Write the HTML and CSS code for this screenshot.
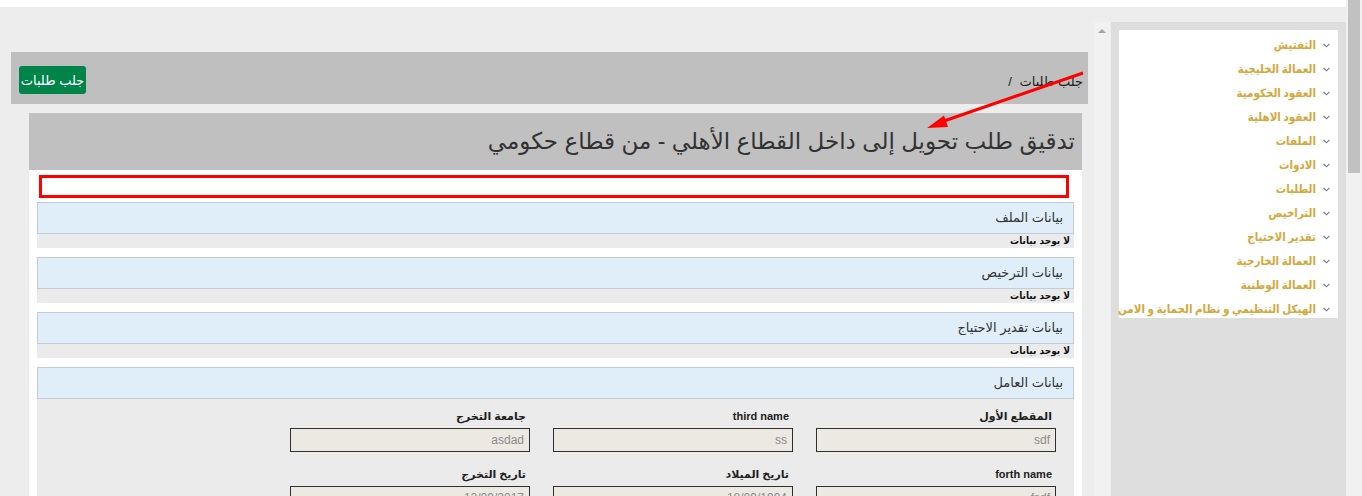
FILE: index.html
```html
<!DOCTYPE html>
<html lang="ar">

<head>
  <meta charset="UTF-8">
  <meta name="viewport" content="width=device-width, initial-scale=1.0">
  <title>تدقيق طلب تحويل</title>
  <link rel="stylesheet" href="styles.css">
</head>

<body>
  <div class="page">
    <div class="viewport">
      <div class="topbar"></div>
      <div class="layout">
        <div class="content">
          <div class="toolbar">
            <div class="breadcrumb">جلب طلبات <span class="sep">/</span></div>
            <button class="fetch-button">جلب طلبات</button>
          </div>

          <div class="request">
            <div class="request-title">تدقيق طلب تحويل إلى داخل القطاع الأهلي - من قطاع حكومي</div>
            <div class="request-body">
              <div class="annotation-box"></div>

              <div class="section-head">بيانات الملف</div>
              <div class="section-empty">لا يوجد بيانات</div>

              <div class="section-head">بيانات الترخيص</div>
              <div class="section-empty">لا يوجد بيانات</div>

              <div class="section-head">بيانات تقدير الاحتياج</div>
              <div class="section-empty">لا يوجد بيانات</div>

              <div class="section-head">بيانات العامل</div>
              <div class="worker-form">
                <div class="field">
                  <label>المقطع الأول</label>
                  <div class="value">sdf</div>
                </div>
                <div class="field">
                  <label>third name</label>
                  <div class="value">ss</div>
                </div>
                <div class="field">
                  <label>جامعة التخرج</label>
                  <div class="value">asdad</div>
                </div>
                <div class="field">
                  <label>forth name</label>
                  <div class="value">fsdf</div>
                </div>
                <div class="field">
                  <label>تاريخ الميلاد</label>
                  <div class="value">18/09/1994</div>
                </div>
                <div class="field">
                  <label>تاريخ التخرج</label>
                  <div class="value">12/09/2017</div>
                </div>
              </div>
            </div>
          </div>
        </div>

        <div class="inner-scroll">
          <div class="scroll-up"></div>
        </div>

        <div class="sidebar">
          <ul class="menu">
            <li><svg class="chev" viewBox="0 0 7 5"><polyline points="0.6,0.8 3.5,3.8 6.4,0.8" /></svg><span>التفتيش</span></li>
            <li><svg class="chev" viewBox="0 0 7 5"><polyline points="0.6,0.8 3.5,3.8 6.4,0.8" /></svg><span>العمالة الخليجية</span></li>
            <li><svg class="chev" viewBox="0 0 7 5"><polyline points="0.6,0.8 3.5,3.8 6.4,0.8" /></svg><span>العقود الحكومية</span></li>
            <li><svg class="chev" viewBox="0 0 7 5"><polyline points="0.6,0.8 3.5,3.8 6.4,0.8" /></svg><span>العقود الاهلية</span></li>
            <li><svg class="chev" viewBox="0 0 7 5"><polyline points="0.6,0.8 3.5,3.8 6.4,0.8" /></svg><span>الملفات</span></li>
            <li><svg class="chev" viewBox="0 0 7 5"><polyline points="0.6,0.8 3.5,3.8 6.4,0.8" /></svg><span>الادوات</span></li>
            <li><svg class="chev" viewBox="0 0 7 5"><polyline points="0.6,0.8 3.5,3.8 6.4,0.8" /></svg><span>الطلبات</span></li>
            <li><svg class="chev" viewBox="0 0 7 5"><polyline points="0.6,0.8 3.5,3.8 6.4,0.8" /></svg><span>التراخيص</span></li>
            <li><svg class="chev" viewBox="0 0 7 5"><polyline points="0.6,0.8 3.5,3.8 6.4,0.8" /></svg><span>تقدير الاحتياج</span></li>
            <li><svg class="chev" viewBox="0 0 7 5"><polyline points="0.6,0.8 3.5,3.8 6.4,0.8" /></svg><span>العمالة الخارجية</span></li>
            <li><svg class="chev" viewBox="0 0 7 5"><polyline points="0.6,0.8 3.5,3.8 6.4,0.8" /></svg><span>العمالة الوطنية</span></li>
            <li><svg class="chev" viewBox="0 0 7 5"><polyline points="0.6,0.8 3.5,3.8 6.4,0.8" /></svg><span>الهيكل التنظيمي و نظام الحماية و الامن</span></li>
          </ul>
        </div>
      </div>
    </div>

    <div class="page-scroll">
      <div class="page-thumb"></div>
    </div>
  </div>

  <svg class="arrow-note" viewBox="0 0 1362 496" xmlns="http://www.w3.org/2000/svg">
    <line x1="1083" y1="73" x2="944" y2="121" />
    <polygon points="927,128 944,115.6 948,127" />
  </svg>
</body>

</html>
```

FILE: styles.css
```css
html,
body {
  margin: 0;
  height: 100%;
  overflow: hidden;
}

body {
  font-family: "Liberation Sans", "DejaVu Sans", sans-serif;
  background-color: #ededed;
  color: #333;
}

.page {
  display: flex;
  height: 100%;
}

.viewport {
  flex: 1;
  display: flex;
  flex-direction: column;
  min-width: 0;
}

.topbar {
  height: 7px;
  background: #fff;
  flex-shrink: 0;
}

.layout {
  flex: 1;
  display: flex;
  padding-top: 15px;
  min-height: 0;
}

/* main column */

.content {
  width: 1094px;
  flex-shrink: 0;
  box-sizing: border-box;
  padding: 30px 6px 0 11px;
}

.toolbar {
  direction: rtl;
  display: flex;
  justify-content: space-between;
  align-items: center;
  height: 52px;
  background: #bfbfbf;
  padding: 0 5px 0 8px;
}

.breadcrumb {
  font-size: 13px;
  color: #222;
  padding-top: 6px;
}

.breadcrumb .sep {
  margin-right: 4px;
}

.fetch-button {
  font-family: inherit;
  font-size: 13px;
  color: #fff;
  background: #00844a;
  border: none;
  border-radius: 3px;
  height: 28px;
  width: 67px;
  padding: 0;
  margin-top: 4px;
}

.request {
  margin: 9px 6px 0 18px;
}

.request-title {
  direction: rtl;
  height: 57px;
  line-height: 57px;
  background: #c0c0c0;
  font-size: 23px;
  color: #333;
  padding-right: 7px;
}

.request-body {
  background: #fff;
  padding: 5px 8px 0 8px;
  height: 400px;
}

.annotation-box {
  height: 23px;
  box-sizing: border-box;
  border: 3px solid #f00;
  margin: 0 5px 4px 2px;
}

.section-head {
  direction: rtl;
  height: 32px;
  box-sizing: border-box;
  line-height: 30px;
  border: 1px solid #c3ccd5;
  background: #e0eef9;
  font-size: 13px;
  color: #333;
  padding-right: 10px;
}

.section-empty {
  direction: rtl;
  height: 14px;
  line-height: 14px;
  background: #ebebeb;
  font-family: "DejaVu Sans Condensed", "DejaVu Sans", sans-serif;
  font-size: 10px;
  font-weight: bold;
  color: #111;
  padding-right: 4px;
  margin-bottom: 9px;
}

.worker-form {
  direction: rtl;
  background: #ebebeb;
  display: grid;
  grid-template-columns: repeat(3, 240px);
  column-gap: 23px;
  padding: 10px 18px 40px 0;
}

.field label {
  display: block;
  font-size: 11px;
  font-weight: bold;
  line-height: 14px;
  color: #222;
  padding-right: 4px;
  margin-bottom: 5px;
}

.field .value {
  height: 24px;
  box-sizing: border-box;
  line-height: 22px;
  border: 1px solid #2f2f2f;
  background: #ebe9e2;
  font-size: 12px;
  color: #8c8c8c;
  padding-right: 5px;
  margin-bottom: 15px;
}

/* scrollbars */

.inner-scroll {
  width: 16px;
  flex-shrink: 0;
  background: #f1f1f1;
}

.scroll-up {
  width: 0;
  height: 0;
  margin: 7px auto 0;
  border-left: 4px solid transparent;
  border-right: 4px solid transparent;
  border-bottom: 4px solid #a3a3a3;
}

.page-scroll {
  width: 16px;
  flex-shrink: 0;
  background: #f1f1f1;
}

.page-thumb {
  height: 173px;
  margin-left: 2px;
  width: 12px;
  background: #c1c1c1;
}

/* side menu */

.sidebar {
  flex: 0 0 235px;
  min-width: 0;
  box-sizing: border-box;
  margin-left: 1px;
  background: #dedede;
  padding: 8px 8px 0 8px;
}

.menu {
  list-style: none;
  margin: 0;
  padding: 3px 0 0 0;
  height: 285px;
  background: #fff;
}

.menu li {
  direction: rtl;
  display: flex;
  align-items: center;
  gap: 7px;
  height: 24px;
  padding-right: 8px;
  font-family: "DejaVu Sans Condensed", "DejaVu Sans", sans-serif;
  font-size: 11.5px;
  word-spacing: -1px;
  font-weight: bold;
  color: #d6a73a;
  white-space: nowrap;
}

.chev {
  width: 7px;
  height: 5px;
  flex-shrink: 0;
}

.chev polyline {
  fill: none;
  stroke: #6b7b8c;
  stroke-width: 1.1;
}

/* red annotation arrow drawn over the page */

.arrow-note {
  position: absolute;
  left: 0;
  top: 0;
  width: 1362px;
  height: 496px;
  pointer-events: none;
}

.arrow-note line {
  stroke: #f00;
  stroke-width: 3;
}

.arrow-note polygon {
  fill: #f00;
}
```
